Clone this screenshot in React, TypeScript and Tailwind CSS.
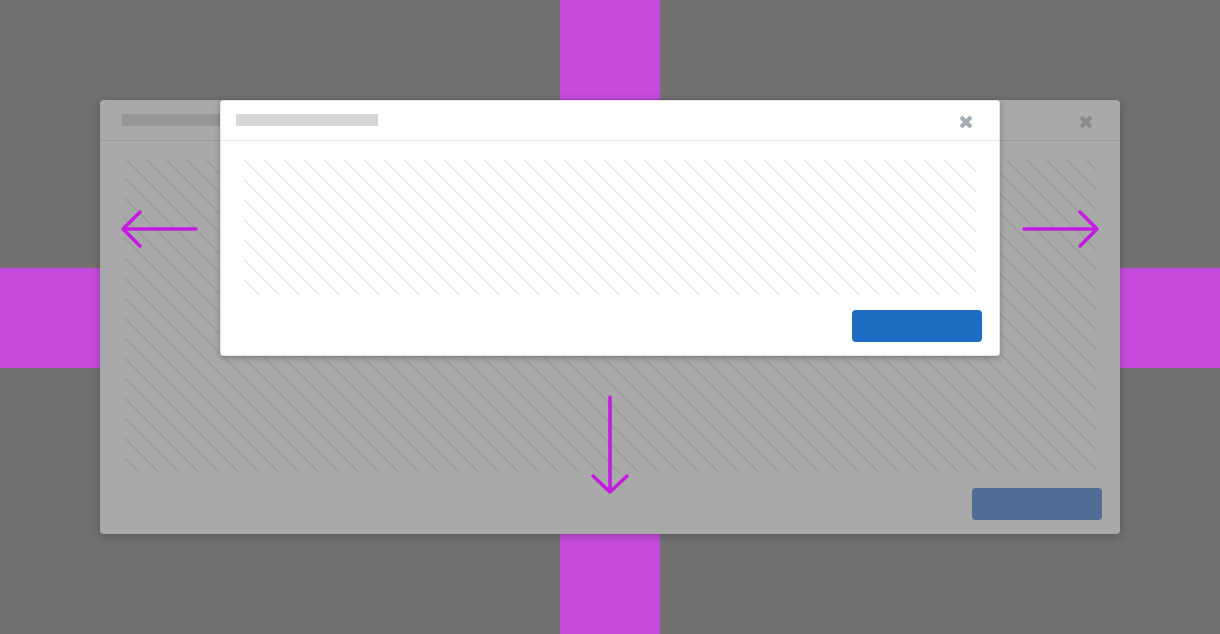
import React from 'react';

const CloseIcon: React.FC<{ className?: string }> = ({ className }) => (
  <svg width="16" height="16" viewBox="0 0 16 16" className={className}>
    <path d="M3 3 L13 13 M13 3 L3 13" stroke="currentColor" strokeWidth="4" strokeLinecap="butt" />
  </svg>
);

const App: React.FC = () => {
  return (
    <div className="relative w-[1220px] h-[634px] overflow-hidden bg-[#717171] font-['Liberation_Sans',sans-serif]">
      {/* backdrop bars */}
      <div className="absolute left-[560px] top-0 w-[100px] h-full bg-[#c44bdc]" />
      <div className="absolute left-0 top-[268px] w-full h-[100px] bg-[#c44bdc]" />

      {/* back dialog (dimmed) */}
      <div className="absolute left-[100px] top-[100px] w-[1020px] h-[434px] flex flex-col rounded-[4px] bg-[#a9a9a9] shadow-[0_2px_8px_rgba(0,0,0,0.25)]">
        <div className="h-[41px] flex items-start justify-between pt-[14px] pl-[22px] pr-[26px] border-b border-[#9d9d9d]">
          <div className="w-[142px] h-[12px] bg-[#969696]" />
          <CloseIcon className="text-[#8a8a8a]" />
        </div>
        <div className="px-[24px] pt-[19px]">
          <div className="h-[313px] bg-[repeating-linear-gradient(45deg,#a9a9a9_0px,#a9a9a9_10.1px,#9c9c9c_10.1px,#9c9c9c_12px,#a9a9a9_12px,#a9a9a9_14.14px)]" />
        </div>
        <div className="flex justify-end pr-[18px] pt-[15px]">
          <div className="w-[130px] h-[32px] rounded-[4px] bg-[#4e6f93]" />
        </div>
      </div>

      {/* front dialog */}
      <div className="absolute left-[220px] top-[100px] w-[780px] h-[256px] flex flex-col rounded-[3px] bg-white border border-[#e1e3e5] shadow-[0_2px_6px_rgba(0,0,0,0.25)]">
        <div className="h-[40px] flex items-start justify-between pt-[13px] pl-[15px] pr-[25px] border-b border-[#e6e8ea]">
          <div className="w-[142px] h-[12px] bg-[#d6d6d6]" />
          <CloseIcon className="text-[#a3aab1]" />
        </div>
        <div className="px-[23px] pt-[19px]">
          <div className="h-[135px] bg-[repeating-linear-gradient(45deg,#ffffff_0px,#ffffff_10.1px,#e9e9e9_10.1px,#e9e9e9_12px,#ffffff_12px,#ffffff_14.14px)]" />
        </div>
        <div className="flex justify-end pr-[17px] pt-[15px]">
          <div className="w-[130px] h-[32px] rounded-[4px] bg-[#1c6dc1]" />
        </div>
      </div>

      {/* direction arrows */}
      <svg className="absolute inset-0 pointer-events-none" width="1220" height="634" viewBox="0 0 1220 634">
        <g stroke="#c41be0" strokeWidth="3.5" fill="none" strokeLinecap="round" strokeLinejoin="round">
          <path d="M196 229 H123 M140 212 L123 229 L140 246" />
          <path d="M1024 229 H1097 M1080 212 L1097 229 L1080 246" />
          <path d="M610 397 V492 M593 476 L610 492 L627 476" />
        </g>
      </svg>
    </div>
  );
};

export default App;
